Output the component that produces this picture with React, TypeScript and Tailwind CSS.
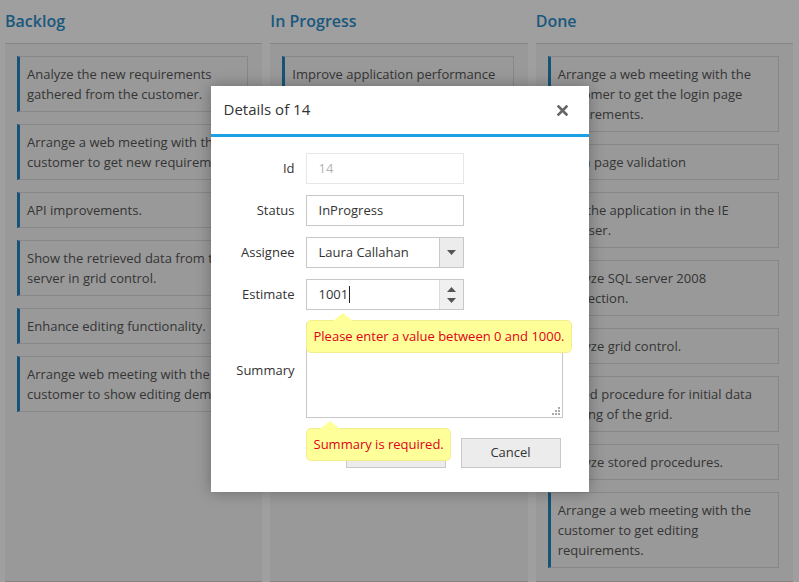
import React from 'react';

const columns = [
  {
    title: 'Backlog',
    cards: [
      'Analyze the new requirements gathered from the customer.',
      'Arrange a web meeting with the customer to get new requirements.',
      'API improvements.',
      'Show the retrieved data from the server in grid control.',
      'Enhance editing functionality.',
      'Arrange web meeting with the customer to show editing demo.',
    ],
  },
  {
    title: 'In Progress',
    cards: ['Improve application performance'],
  },
  {
    title: 'Done',
    cards: [
      'Arrange a web meeting with the customer to get the login page requirements.',
      'Login page validation',
      'Test the application in the IE browser.',
      'Analyze SQL server 2008 connection.',
      'Analyze grid control.',
      'Stored procedure for initial data binding of the grid.',
      'Analyze stored procedures.',
      'Arrange a web meeting with the customer to get editing requirements.',
    ],
  },
];

function Board() {
  return (
    <div className="grid grid-cols-3 gap-x-2 pl-[5px] pr-[6px] bg-white min-h-[582px]">
      {columns.map(col => (
        <div key={col.title} className="flex flex-col">
          <div className="h-[44px] flex items-center border-b border-[#d4d4d4]">
            <span className="text-[16px] font-semibold text-[#2c8ecb] leading-none pb-[1px]">{col.title}</span>
          </div>
          <div className="flex-1 bg-[#f5f5f5] border-b border-[#d4d4d4] pl-3 pr-[14px] pt-3 pb-3 flex flex-col gap-3">
            {col.cards.map(c => (
              <div key={c} className="border border-[#d9d9d9] border-l-[3px] border-l-[#2585bd] pl-[7px] pr-[2px] py-[7px] text-[13px] leading-[20px] text-[#555]">
                {c}
              </div>
            ))}
          </div>
        </div>
      ))}
    </div>
  );
}

function Caret({ up }: { up?: boolean }) {
  return (
    <svg width="9" height="5" viewBox="0 0 9 5" className="block">
      {up ? <path d="M0 5 L4.5 0 L9 5 Z" fill="#555" /> : <path d="M0 0 L9 0 L4.5 5 Z" fill="#555" />}
    </svg>
  );
}

function Tooltip({ text, className, arrow }: { text: string; className: string; arrow: string }) {
  return (
    <div className={`absolute h-[33px] bg-[#ffff99] border border-[#f2ee8f] rounded-[5px] flex items-center pl-[7px] pr-[6px] text-[13px] text-[#e0001b] whitespace-nowrap ${className}`}>
      <svg width="20" height="8" viewBox="0 0 20 8" className={`absolute top-[-8px] ${arrow}`}>
        <path d="M0 8 L10 0 L20 8 Z" fill="#ffff99" />
      </svg>
      {text}
    </div>
  );
}

function Dialog() {
  return (
    <div className="relative w-[378px] mb-1 bg-white shadow-[0_0_14px_rgba(0,0,0,0.3)] text-[#333]">
      <div className="h-[51px] flex items-center justify-between pl-[13px] pr-[21px] border-b-[3px] border-[#1ba1e2]">
        <span className="text-[15px] pb-[1px]">Details of 14</span>
        <svg width="11" height="11" viewBox="0 0 11 11">
          <path d="M1.5 1.5 L9.5 9.5 M9.5 1.5 L1.5 9.5" stroke="#666" strokeWidth="2.6" strokeLinecap="square" />
        </svg>
      </div>
      <div className="pt-4 pb-6 pr-[27px] text-[13px]">
        <div className="grid grid-cols-[84px_1fr] gap-x-[11px] gap-y-[11px] items-center">
          <label className="text-right text-[#333]">Id</label>
          <div className="w-[158px] h-[31px] border border-[#e6e6e6] flex items-center pl-3 text-[#b3b3b3]">14</div>

          <label className="text-right">Status</label>
          <div className="w-[158px] h-[31px] border border-[#c8c8c8] flex items-center pl-3">InProgress</div>

          <label className="text-right">Assignee</label>
          <div className="w-[158px] h-[31px] border border-[#c8c8c8] flex">
            <div className="flex-1 flex items-center pl-3">Laura Callahan</div>
            <div className="w-[24px] bg-[#ececec] border-l border-[#c8c8c8] flex items-center justify-center">
              <Caret />
            </div>
          </div>

          <label className="text-right">Estimate</label>
          <div className="w-[158px] h-[31px] border border-[#c8c8c8] flex">
            <div className="flex-1 flex items-center pl-3">
              1001<span className="inline-block w-px h-[17px] bg-[#222] ml-[1px]" />
            </div>
            <div className="w-[24px] bg-[#f0f0f0] border-l border-[#dcdcdc] flex flex-col items-center justify-center gap-[6px]">
              <Caret up />
              <Caret />
            </div>
          </div>

          <label className="text-right mt-[2px]">Summary</label>
          <div className="relative w-[257px] h-[95px] border border-[#c8c8c8] mt-[2px]">
            <svg width="8" height="8" viewBox="0 0 8 8" className="absolute right-[2px] bottom-[2px]">
              <rect x="6" y="0" width="2" height="2" fill="#aaa" />
              <rect x="3" y="3" width="2" height="2" fill="#aaa" />
              <rect x="6" y="3" width="2" height="2" fill="#aaa" />
              <rect x="0" y="6" width="2" height="2" fill="#aaa" />
              <rect x="3" y="6" width="2" height="2" fill="#aaa" />
              <rect x="6" y="6" width="2" height="2" fill="#aaa" />
            </svg>
          </div>
        </div>
        <div className="flex justify-end gap-[15px] mt-5 pr-[1px]">
          <button className="w-[100px] h-[30px] bg-[#ececec] border border-[#c8c8c8] text-[#333]">Save</button>
          <button className="w-[100px] h-[30px] bg-[#ececec] border border-[#c8c8c8] text-[#333]">Cancel</button>
        </div>
      </div>
      <Tooltip text="Please enter a value between 0 and 1000." className="left-[95px] top-[234px]" arrow="left-[26px]" />
      <Tooltip text="Summary is required." className="left-[95px] top-[342px]" arrow="left-[13px]" />
    </div>
  );
}

export default function App() {
  return (
    <div className="relative w-[799px] h-[582px] overflow-hidden" style={{ fontFamily: '"Open Sans", "Noto Sans", sans-serif' }}>
      <Board />
      <div className="absolute inset-0 bg-black/[0.375] flex items-center justify-center">
        <Dialog />
      </div>
    </div>
  );
}
